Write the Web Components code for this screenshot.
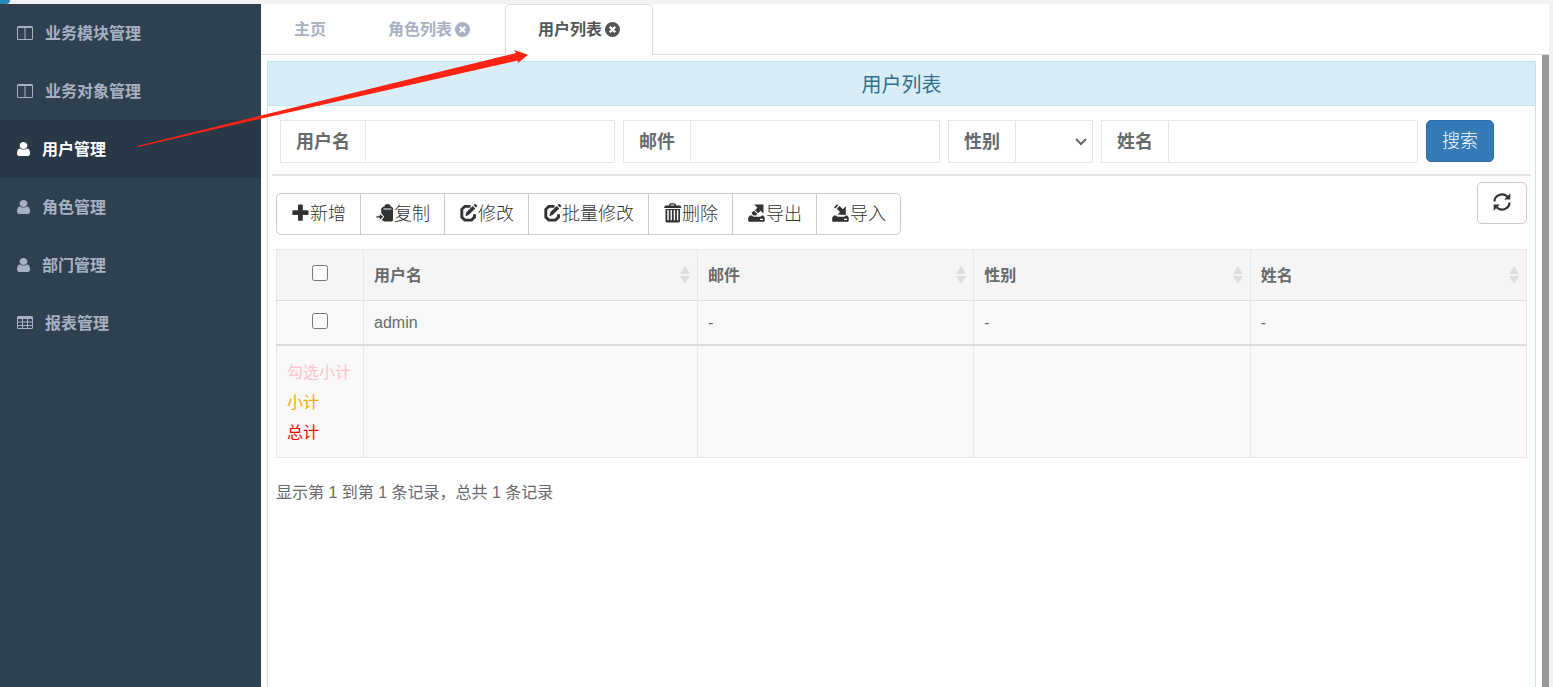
<!DOCTYPE html>
<html lang="zh-CN">
<head>
<meta charset="utf-8">
<title>用户列表</title>
<style>
  html, body {
    margin: 0;
    height: 100%;
    overflow: hidden;
  }
  body {
    background: #f2f2f2;
    color: #676a6c;
    font: 16px/24px "Liberation Sans", "Noto Sans CJK SC", sans-serif;
  }
</style>
</head>
<body>
<app-shell>
  <side-menu slot="menu">
    <menu-item icon="columns">业务模块管理</menu-item>
    <menu-item icon="columns">业务对象管理</menu-item>
    <menu-item icon="user" active>用户管理</menu-item>
    <menu-item icon="user">角色管理</menu-item>
    <menu-item icon="user">部门管理</menu-item>
    <menu-item icon="table">报表管理</menu-item>
  </side-menu>
  <tab-bar slot="tabs">
    <tab-item home>主页</tab-item>
    <tab-item closable>角色列表</tab-item>
    <tab-item closable active>用户列表</tab-item>
  </tab-bar>
  <info-panel heading="用户列表">
    <search-form>
      <search-field label="用户名"></search-field>
      <search-field label="邮件"></search-field>
      <search-field label="性别" type="select"></search-field>
      <search-field label="姓名"></search-field>
    </search-form>
    <tool-bar>
      <tool-button icon="plus">新增</tool-button>
      <tool-button icon="paste">复制</tool-button>
      <tool-button icon="edit">修改</tool-button>
      <tool-button icon="edit">批量修改</tool-button>
      <tool-button icon="trash">删除</tool-button>
      <tool-button icon="export">导出</tool-button>
      <tool-button icon="import">导入</tool-button>
      <tool-button icon="refresh" label="刷新" single slot="right"></tool-button>
    </tool-bar>
    <user-table></user-table>
  </info-panel>
</app-shell>
<pointer-arrow></pointer-arrow>

<script>
const icons = {
  columns: [16, 14, '<path fill-rule="evenodd" d="M1.500 0h13A1.500 1.500 0 0 1 16 1.500v11a1.500 1.500 0 0 1-1.500 1.500h-13A1.500 1.500 0 0 1 0 12.500v-11A1.500 1.500 0 0 1 1.500 0zM1 2v10.500q0 .5.5.5h6V2zm7.500 0v11h6q.5 0 .5-.5V2z"/>'],
  user: [13, 14, '<path transform="scale(.01016 .00912) translate(-256 -128)" d="M1536 1399q0 109-62.500 187t-150.500 78h-854q-88 0-150.500-78t-62.500-187q0-85 8.500-160.500t31.500-152 58.500-131 94-89 134.500-34.500q131 128 313 128t313-128q76 0 134.500 34.500t94 89 58.500 131 31.500 152 8.500 160.500zm-256-887q0 159-112.500 271.500t-271.500 112.500-271.500-112.500-112.500-271.500 112.500-271.500 271.500-112.500 271.500 112.500 112.500 271.500z"/>'],
  table: [16, 14, '<path fill-rule="evenodd" d="M1.500 0h13A1.500 1.500 0 0 1 16 1.500v10a1.500 1.500 0 0 1-1.500 1.500h-13A1.500 1.500 0 0 1 0 11.500v-10A1.500 1.500 0 0 1 1.500 0zM1 3v2.500h4V3zm5 0v2.500h4V3zm5 0v2.500h4V3zM1 6.500V9h4V6.500zm5 0V9h4V6.500zm5 0V9h4V6.500zM1 10v2h4v-2zm5 0v2h4v-2zm5 0v2h4v-2z"/>'],
  close: [15, 15, '<path fill-rule="evenodd" d="M7.500 0a7.500 7.500 0 1 1 0 15 7.500 7.500 0 0 1 0-15zM5.500 4L4 5.500l2 2-2 2L5.500 11l2-2 2 2L11 9.500l-2-2 2-2L9.500 4l-2 2z"/>'],
  plus: [18, 18, '<path d="M6 1.500q0-.9.9-.9h3q.9 0 .9.9v4.800h4.800q.9 0 .9.9v3q0 .9-.9.9h-4.800v4.800q0 .9-.9.9h-3q-.9 0-.9-.9v-4.800H1.200q-.9 0-.9-.9v-3q0-.9.9-.9H6z"/>'],
  paste: [18, 18, '<path d="M5.200 4.500L7.500 2.500h1.200V1.300L9.800.3h3.400l1.100 1v1.200h1.200L17 4v12.500l-1 1H8.500L5.600 16l2.600-3.200L5.200 9z"/><path d="M3.400 9.200l4.300 3.600-4.300 3.700v-2.600H0v-2.100h3.400z" stroke="#fff" stroke-width=".8"/><path d="M7.500 5h7.800" stroke="#fff" stroke-width="1"/>'],
  edit: [18, 18, '<path fill="none" stroke="currentColor" stroke-width="2.900" d="M10.500 2.400H4.900L1.800 5.300v7.800l3 3h6.700l3-3v-2.900"/><path d="M6.300 8.300L12.700 2l2.600 2.600-6.700 6.300-3.200 1.300zM13.600 1.200l1-.9q.7-.5 1.400.1l.9.9q.6.700 0 1.400l-.9.900z"/>'],
  trash: [18, 20, '<path d="M5 2.500V1.600L6.400.3h4.200L12 1.600v.9h4.500L17.500 5H0l1-2.500zm1.600 0h3.800V1.500H6.600z" fill-rule="evenodd"/><path fill-rule="evenodd" d="M1.500 6h14.500v12.500l-1 1h-12.500l-1-1zM3.300 7v10.300h1.500V7zm3.200 0v10.300h1.400V7zm3.200 0v10.300h1.400V7zm3.200 0v10.300h1.400V7z"/>'],
  export: [18, 18, '<path d="M6.200.5h9.300v9l-2.900-2.700-2.500 2.500-3.100-3.100 2.400-2.500zM6.200 6.700l3.200 3.200-1.500 1.500H5.500L3.800 9.800V8.300z"/><path d="M2 11.500h2l1.500 1.200h6.800l1.500-1.200h1.400l1.500 2V17l-.8.800H.9L.2 17v-3.500zM12 14.800v1.100h3v-1.100z" fill-rule="evenodd"/>'],
  import: [18, 18, '<path d="M5.500 10.400l2.500-2.500-3.200-3.100 2.800-2.900 3.300 3.300 2.900-2.900v8.800zM2 3.500L4.900.3 6.200 1.400 3.300 4.500z"/><path d="M2 11.500h2l1.500 1.200h6.800l1.500-1.200h1.400l1.500 2V17l-.8.800H.9L.2 17v-3.500zM12 14.800v1.100h3v-1.100z" fill-rule="evenodd"/>'],
  refresh: [18, 18, '<path fill="none" stroke="currentColor" stroke-width="2.200" d="M1.500 8.600a7.500 7 0 0 1 12.800-5M16.500 9.400a7.500 7 0 0 1-12.800 5"/><path d="M17.300.3v6.300h-6.100zM.7 17.700v-6.300h6.100z"/>'],
  sort: [10, 18, '<path d="M5 0l5 8H0zM5 18l5-8H0z"/>'],
  chevron: [12, 8, '<path fill="none" stroke="currentColor" stroke-width="2" d="M1 1l5 5 5-5"/>']
};

class AppIcon extends HTMLElement {
  connectedCallback() {
    const [w, h, shape] = icons[this.getAttribute("name")];
    if (!this.shadowRoot) this.attachShadow({ mode: "open" });
    this.shadowRoot.innerHTML = `
      <style>
        :host { display: inline-flex; flex: none; }
        svg { display: block; fill: currentColor; }
      </style>
      <svg width="${w}" height="${h}" viewBox="0 0 ${w} ${h}" aria-hidden="true">${shape}</svg>`;
  }
}

class AppShell extends HTMLElement {
  constructor() {
    super();
    this.attachShadow({ mode: "open" }).innerHTML = `
      <style>
        :host {
          display: grid;
          grid-template-columns: 261px minmax(0, 1fr);
          box-sizing: border-box;
          height: 100vh;
          padding: 4px 4px 0 0;
        }
        .logo {
          position: absolute;
          top: 0;
          left: 0;
          width: 10px;
          height: 4px;
          border-radius: 0 0 10px 0;
          background: #2789b8;
        }
        main {
          display: flex;
          flex-direction: column;
          min-height: 0;
          background: #fff;
        }
        .view {
          display: grid;
          grid-template-columns: minmax(0, 1fr) 7px;
          flex: 1;
          min-height: 0;
        }
        .content {
          display: grid;
          padding: 6px 6px 0;
        }
        .scroll { background: #999; }
      </style>
      <div class="logo"></div>
      <slot name="menu"></slot>
      <main>
        <slot name="tabs"></slot>
        <div class="view">
          <div class="content"><slot></slot></div>
          <div class="scroll"></div>
        </div>
      </main>`;
  }
}

class SideMenu extends HTMLElement {
  constructor() {
    super();
    this.attachShadow({ mode: "open" }).innerHTML = `
      <style>
        :host { display: block; background: #2f4050; }
        nav { display: flex; flex-direction: column; }
      </style>
      <nav><slot></slot></nav>`;
  }
}

class MenuItem extends HTMLElement {
  constructor() {
    super();
    this.attachShadow({ mode: "open" }).innerHTML = `
      <style>
        :host { display: block; color: #a7b1c2; font-weight: bold; }
        :host([active]) { background: #293846; color: #fff; }
        a {
          display: flex;
          align-items: center;
          gap: 12px;
          height: 58px;
          padding: 0 17px;
          color: inherit;
          text-decoration: none;
        }
        span { padding-top: 2px; }
      </style>
      <a href="#"><app-icon name="${this.getAttribute("icon")}"></app-icon><span><slot></slot></span></a>`;
  }
}

class TabBar extends HTMLElement {
  constructor() {
    super();
    this.attachShadow({ mode: "open" }).innerHTML = `
      <style>
        :host { display: block; }
        nav {
          display: flex;
          gap: 2px;
          height: 50px;
          border-bottom: 1px solid #ddd;
        }
      </style>
      <nav><slot></slot></nav>`;
  }
}

class TabItem extends HTMLElement {
  constructor() {
    super();
    const close = this.hasAttribute("closable")
      ? '<button aria-label="关闭"><app-icon name="close"></app-icon></button>' : "";
    this.attachShadow({ mode: "open" }).innerHTML = `
      <style>
        :host {
          display: flex;
          align-items: center;
          gap: 3px;
          box-sizing: border-box;
          height: 51px;
          padding: 0 32px;
          border: 1px solid transparent;
          color: #a7b1c2;
          font-weight: bold;
        }
        :host([home]) { padding-right: 26px; }
        :host([active]) {
          border-color: #ddd #ddd #fff;
          border-radius: 5px 5px 0 0;
          background: #fff;
          color: #555;
        }
        a { color: inherit; text-decoration: none; }
        button {
          display: flex;
          padding: 0;
          border: 0;
          background: none;
          color: inherit;
        }
      </style>
      <a href="#"><slot></slot></a>${close}`;
  }
}

class InfoPanel extends HTMLElement {
  constructor() {
    super();
    this.attachShadow({ mode: "open" }).innerHTML = `
      <style>
        :host {
          display: block;
          border: 1px solid #bce8f1;
          border-bottom: 0;
        }
        h1 {
          margin: 0;
          padding-top: 3px;
          border-bottom: 1px solid #bce8f1;
          background: #d9edf7;
          color: #31708f;
          font-size: 20px;
          font-weight: normal;
          line-height: 40px;
          text-align: center;
        }
      </style>
      <h1>${this.getAttribute("heading")}</h1>
      <slot></slot>`;
  }
}

class SearchForm extends HTMLElement {
  constructor() {
    super();
    this.attachShadow({ mode: "open" }).innerHTML = `
      <style>
        :host { display: block; padding: 0 4px; }
        form {
          display: flex;
          flex-wrap: wrap;
          gap: 8px;
          padding: 14px 8px 11px;
          border-bottom: 2px solid #e5e5e5;
        }
        button {
          height: 42px;
          padding: 0 15px;
          border: 1px solid #2e6da4;
          border-radius: 5px;
          background: #337ab7;
          color: #fff;
          font: inherit;
          font-size: 18px;
          font-weight: 300;
        }
      </style>
      <form><slot></slot><button type="button">搜索</button></form>`;
  }
}

class SearchField extends HTMLElement {
  constructor() {
    super();
    const control = this.getAttribute("type") === "select"
      ? '<select id="field"><option></option><option>男</option><option>女</option></select><app-icon name="chevron"></app-icon>'
      : '<input id="field" type="text">';
    this.attachShadow({ mode: "open" }).innerHTML = `
      <style>
        :host { display: flex; height: 43px; }
        label {
          padding: 0 15px;
          border: 1px solid #e5e6e7;
          border-right: 0;
          font-size: 18px;
          font-weight: bold;
          line-height: 42px;
        }
        .control {
          display: grid;
          align-items: center;
        }
        .control > * { grid-area: 1 / 1; }
        input, select {
          box-sizing: border-box;
          width: 250px;
          height: 43px;
          margin: 0;
          padding: 0 15px;
          border: 1px solid #e5e6e7;
          border-radius: 1px;
          background: #fff;
          color: inherit;
          font: inherit;
        }
        select { width: 78px; appearance: none; }
        app-icon {
          justify-self: end;
          padding-right: 6px;
          pointer-events: none;
        }
      </style>
      <label for="field">${this.getAttribute("label")}</label>
      <div class="control">${control}</div>`;
  }
}

class ToolBar extends HTMLElement {
  constructor() {
    super();
    this.attachShadow({ mode: "open" }).innerHTML = `
      <style>
        :host {
          display: flex;
          justify-content: space-between;
          align-items: flex-start;
          padding: 6px 8px 0;
        }
        .group { display: flex; padding: 11px 1px 14px 0; }
      </style>
      <div class="group"><slot></slot></div>
      <slot name="right"></slot>`;
  }
}

class ToolButton extends HTMLElement {
  constructor() {
    super();
    const label = this.getAttribute("label");
    this.attachShadow({ mode: "open" }).innerHTML = `
      <style>
        :host { display: block; margin-right: -1px; }
        :host([single]) { margin-right: 0; }
        button {
          display: flex;
          align-items: center;
          height: 42px;
          padding: 0 14px 0 15px;
          border: 1px solid #ccc;
          background: #fff;
          color: #333;
          font: inherit;
          font-size: 18px;
          font-weight: 300;
        }
        :host(:first-child) button { border-radius: 5px 0 0 5px; }
        :host([icon="import"]) button { border-radius: 0 5px 5px 0; }
        :host([single]) button { padding: 0 15px; border-radius: 5px; }
        app-icon { padding-bottom: 2px; }
      </style>
      <button type="button"${label ? ` aria-label="${label}"` : ""}><app-icon name="${this.getAttribute("icon")}"></app-icon><slot></slot></button>`;
  }
}

class UserTable extends HTMLElement {
  constructor() {
    super();
    const fields = ["用户名", "邮件", "性别", "姓名"];
    const rows = [["admin", "-", "-", "-"]];
    this.attachShadow({ mode: "open" }).innerHTML = `
      <style>
        :host { display: block; padding: 0 8px; }
        table {
          width: 100%;
          table-layout: fixed;
          border-collapse: collapse;
          background: #f9f9f9;
        }
        .check { width: 87px; }
        .first { width: 334px; }
        th, td {
          padding: 0 10px;
          border: 1px solid #e7e7e7;
          text-align: left;
        }
        th {
          height: 50px;
          border-bottom-color: #ddd;
          background: #f5f5f6;
        }
        tbody td { height: 43px; }
        .box { padding-bottom: 5px; text-align: center; }
        tbody .box { height: 38px; }
        thead .box { height: 45px; }
        .head {
          display: flex;
          align-items: center;
          justify-content: space-between;
        }
        .head span { padding-top: 2px; }
        .head button {
          display: flex;
          margin-right: -3px;
          padding: 0;
          border: 0;
          background: none;
          color: #ddd;
        }
        input {
          width: 16px;
          height: 16px;
          margin: 0;
          vertical-align: middle;
        }
        tfoot { border-top: 2px solid #ddd; }
        tfoot td { padding: 12px 10px 9px; line-height: 30px; white-space: nowrap; }
        .picked { color: pink; }
        .sub { color: orange; }
        .total { color: red; }
        p { margin: 0; padding-top: 23px; }
      </style>
      <table>
        <colgroup><col class="check"><col class="first"><col><col><col></colgroup>
        <thead>
          <tr>
            <th class="box"><input type="checkbox" aria-label="全选"></th>
            ${fields.map((f) => `<th><div class="head"><span>${f}</span><button aria-label="排序"><app-icon name="sort"></app-icon></button></div></th>`).join("")}
          </tr>
        </thead>
        <tbody>
          ${rows.map((row) => `<tr><td class="box"><input type="checkbox" aria-label="${row[0]}"></td>${row.map((v) => `<td>${v}</td>`).join("")}</tr>`).join("")}
        </tbody>
        <tfoot>
          <tr>
            <td><div class="picked">勾选小计</div><div class="sub">小计</div><div class="total">总计</div></td>
            <td></td><td></td><td></td><td></td>
          </tr>
        </tfoot>
      </table>
      <p>显示第 1 到第 1 条记录，总共 1 条记录</p>`;
  }
}

// red arrow lying over the page, from the menu entry to its tab
class PointerArrow extends HTMLElement {
  constructor() {
    super();
    this.attachShadow({ mode: "open" }).innerHTML = `
      <style>
        :host {
          display: block;
          position: absolute;
          top: 48px;
          left: 136px;
          pointer-events: none;
        }
        svg { display: block; }
      </style>
      <svg width="394" height="102" viewBox="136 48 394 102" aria-hidden="true">
        <path fill="#ff2313" d="M137.500 146L262 115.200 516 53 514 50l14 4.800-10 8.200-.5-2.500L262 118.400 138 147z"/>
      </svg>`;
  }
}

customElements.define("app-icon", AppIcon);
customElements.define("app-shell", AppShell);
customElements.define("side-menu", SideMenu);
customElements.define("menu-item", MenuItem);
customElements.define("tab-bar", TabBar);
customElements.define("tab-item", TabItem);
customElements.define("info-panel", InfoPanel);
customElements.define("search-form", SearchForm);
customElements.define("search-field", SearchField);
customElements.define("tool-bar", ToolBar);
customElements.define("tool-button", ToolButton);
customElements.define("user-table", UserTable);
customElements.define("pointer-arrow", PointerArrow);
</script>
</body>
</html>
